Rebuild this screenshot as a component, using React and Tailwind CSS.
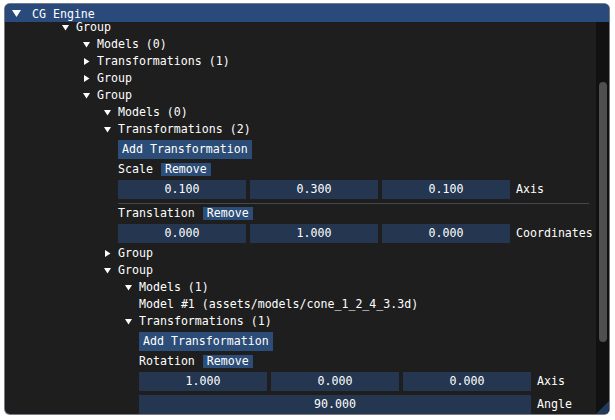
import React from 'react';

const font = { fontFamily: '"DejaVu Sans Mono", "Liberation Mono", monospace' };

const Arrow = ({ open }) =>
    open ? (
        <svg width="7" height="6" viewBox="0 0 7 6" className="ml-[7px]">
            <polygon points="0,0 7,0 3.5,5.5" fill="#ffffff" />
        </svg>
    ) : (
        <svg width="6" height="7" viewBox="0 0 6 7" className="ml-[8px]">
            <polygon points="0,0 5.5,3.5 0,7" fill="#ffffff" />
        </svg>
    );

const Node = ({ pl, open, label }) => (
    <div className={`flex items-center h-[13px] leading-[13px] ${pl}`}>
        <div className="w-[21px] h-[13px] flex items-center shrink-0">
            <Arrow open={open} />
        </div>
        <span className="whitespace-pre">{label}</span>
    </div>
);

const Line = ({ pl, children }) => (
    <div className={`flex items-center h-[13px] leading-[13px] whitespace-pre ${pl}`}>{children}</div>
);

const Button = ({ label }) => (
    <div className="h-[19px] leading-[19px] px-[4px] bg-[#2c4d77] whitespace-pre">{label}</div>
);

const SmallButton = ({ label }) => (
    <span className="h-[13px] leading-[13px] px-[4px] ml-[8px] bg-[#2c4d77]">{label}</span>
);

const Field = ({ value, w = 'w-[128px]' }) => (
    <div className={`${w} shrink-0 h-[19px] leading-[19px] text-center bg-[#243650] whitespace-pre`}>{value}</div>
);

const Inputs = ({ pl, values, label }) => (
    <div className={`flex items-center gap-[4px] ${pl}`}>
        {values.map((v, i) => (
            <Field key={i} value={v} />
        ))}
        <span className="ml-[2px] shrink-0 whitespace-pre">{label}</span>
    </div>
);

export default function App() {
    return (
        <div className="w-[615px] h-[420px] bg-white pt-[4px] pl-[5px] overflow-hidden text-[11.6px] text-white" style={font}>
            <div className="relative w-[604px] h-[410px] flex flex-col rounded-[5px] bg-[#1e1e1e] ring-1 ring-[#7a7a84] overflow-hidden">
                {/* title bar */}
                <div className="h-[18px] flex items-center bg-[#294a7a] shrink-0">
                    <svg width="9" height="7" viewBox="0 0 9 7" className="ml-[7px] mt-[1px]">
                        <polygon points="0,0 9,0 4.5,7" fill="#ffffff" />
                    </svg>
                    <span className="ml-[11px] mt-[2px] leading-[13px]">CG Engine</span>
                </div>

                <div className="flex flex-1 overflow-hidden">
                    <div className="flex-1 min-w-0 overflow-hidden">
                        <div className="flex flex-col gap-[4px] mt-[-1px] pr-[7px]">
                            <Node pl="pl-[50px]" open label="Group" />
                            <Node pl="pl-[71px]" open label="Models (0)" />
                            <Node pl="pl-[71px]" label="Transformations (1)" />
                            <Node pl="pl-[71px]" label="Group" />
                            <Node pl="pl-[71px]" open label="Group" />
                            <Node pl="pl-[92px]" open label="Models (0)" />
                            <Node pl="pl-[92px]" open label="Transformations (2)" />
                            <div className="flex pl-[113px]">
                                <Button label="Add Transformation" />
                            </div>
                            <Line pl="pl-[113px]">
                                Scale<SmallButton label="Remove" />
                            </Line>
                            <Inputs pl="pl-[113px]" values={['0.100', '0.300', '0.100']} label="Axis" />
                            <div className="ml-[113px] h-[1px] mb-[-1px] bg-[#46464f]" />
                            <Line pl="pl-[113px]">
                                Translation<SmallButton label="Remove" />
                            </Line>
                            <Inputs pl="pl-[113px]" values={['0.000', '1.000', '0.000']} label="Coordinates" />
                            <Node pl="pl-[92px]" label="Group" />
                            <Node pl="pl-[92px]" open label="Group" />
                            <Node pl="pl-[113px]" open label="Models (1)" />
                            <Line pl="pl-[134px]">Model #1 (assets/models/cone_1_2_4_3.3d)</Line>
                            <Node pl="pl-[113px]" open label="Transformations (1)" />
                            <div className="flex pl-[134px]">
                                <Button label="Add Transformation" />
                            </div>
                            <Line pl="pl-[134px]">
                                Rotation<SmallButton label="Remove" />
                            </Line>
                            <Inputs pl="pl-[134px]" values={['1.000', '0.000', '0.000']} label="Axis" />
                            <div className="flex items-center gap-[4px] pl-[134px]">
                                <Field value="90.000" w="w-[392px]" />
                                <span className="ml-[2px]">Angle</span>
                            </div>
                        </div>
                    </div>

                    {/* scrollbar */}
                    <div className="w-[13px] bg-[#111111] shrink-0 pt-[60px]">
                        <div className="ml-[3px] w-[8px] h-[260px] rounded-full bg-[#4f4f4f]" />
                    </div>
                </div>

                {/* resize grip */}
                <svg width="13" height="13" viewBox="0 0 13 13" className="absolute right-0 bottom-0">
                    <polygon points="13,0 13,13 0,13" fill="#213a5c" />
                </svg>
            </div>
        </div>
    );
}
